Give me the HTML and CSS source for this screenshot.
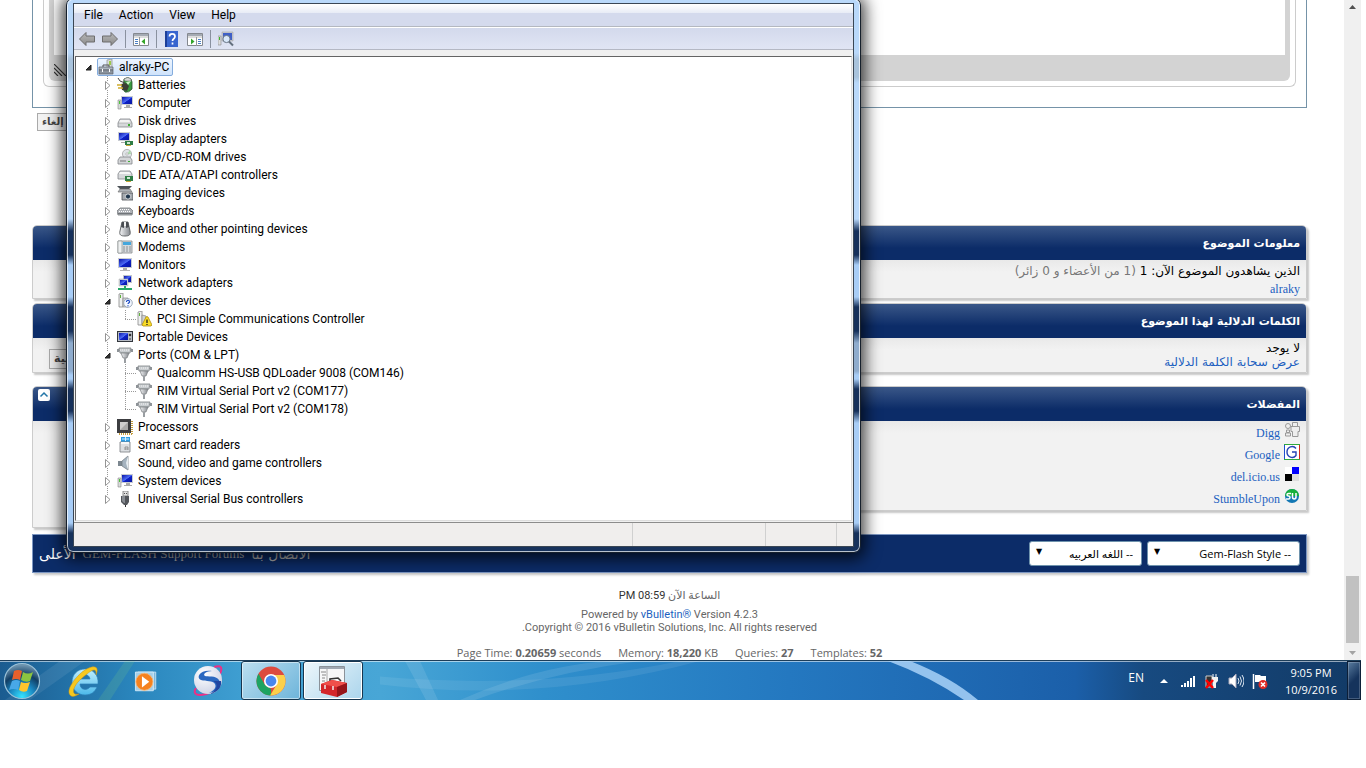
FILE: index.html
```html
<!DOCTYPE html>
<html lang="ar">
<head>
    <meta charset="UTF-8">
    <meta name="viewport" content="width=device-width, initial-scale=1.0">
    <title>GEM-FLASH Support Forums</title>
    <link rel="stylesheet" href="styles.css">
</head>
<body>
    <svg class="sprite" aria-hidden="true">
        <defs>
            <linearGradient id="g-metal" x1="0" y1="0" x2="1" y2="0"><stop offset="0" stop-color="#f4f5f6"/><stop offset="1" stop-color="#85898f"/></linearGradient>
            <linearGradient id="g-arrow" x1="0" y1="0" x2="0" y2="1"><stop offset="0" stop-color="#b9b9b9"/><stop offset="1" stop-color="#8a8a8a"/></linearGradient>
            <linearGradient id="g-screen" x1="0" y1="0" x2="1" y2="1"><stop offset="0" stop-color="#0a14a8"/><stop offset=".5" stop-color="#4d6cf5"/><stop offset=".55" stop-color="#0d20c8"/><stop offset="1" stop-color="#0818a0"/></linearGradient>
            <linearGradient id="g-e" x1="0" y1="0" x2="0" y2="1"><stop offset="0" stop-color="#c2f0ff"/><stop offset="1" stop-color="#4bb8ea"/></linearGradient>
            <radialGradient id="g-orb" cx=".5" cy=".95" r=".9"><stop offset="0" stop-color="#35e4ff"/><stop offset=".4" stop-color="#1a86c0"/><stop offset=".7" stop-color="#123e64"/><stop offset="1" stop-color="#6d93ae"/></radialGradient>
            <radialGradient id="g-ball" cx=".35" cy=".3" r=".8"><stop offset="0" stop-color="#ffffff"/><stop offset="1" stop-color="#c9cfe4"/></radialGradient>
        </defs>
        <symbol id="i-monitor" viewBox="0 0 16 16"><path d="M1 1h14v10H1z" fill="#c9ccd2"/><path d="M2 2h12v8H2z" fill="url(#g-screen)"/><path d="M6 11h4v2H6z" fill="#aaa"/><path d="M3 13h10v1H3z" fill="#b8b8b8"/></symbol>
        <symbol id="i-computer" viewBox="0 0 16 16"><path d="M4 1h12v9H4z" fill="#c9ccd2"/><path d="M5 2h10v7H5z" fill="url(#g-screen)"/><path d="M9 10h4v2H9zM7 12h8v1H7z" fill="#aaa"/><path d="M1 5h3v9H1z" fill="#d8dada" stroke="#888" stroke-width=".6"/><path d="M2 6h1v3H2z" fill="#4cc23a"/></symbol>
        <symbol id="i-root" viewBox="0 0 16 16"><path d="M9 1l5-1v9H9z" fill="#d9ddd9" stroke="#8b8f92" stroke-width=".7"/><path d="M11 2h2v4h-2z" fill="#9bc94b"/><path d="M5 8V6h6v2" fill="none" stroke="#555"/><path d="M1 8h14v3H1z" fill="#aeb6bf" stroke="#5a6068" stroke-width=".7"/><path d="M1 11h14v4H1z" fill="#8a939d" stroke="#5a6068" stroke-width=".7"/><path d="M4 10h1v3H4zM11 10h1v3h-1z" fill="#fff"/></symbol>
        <symbol id="i-battery" viewBox="0 0 16 16"><path d="M7 2q4-3 7 0l1 3v7q-3 4-7 3l-2-3z" fill="#3a9a3f" stroke="#2b4a2d" stroke-width=".8"/><path d="M7 2q4-3 7 0v2H8z" fill="#d8dad8" stroke="#777" stroke-width=".6"/><path d="M9 5l5-1-3 4z" fill="#c9f5c4"/><path d="M1 1l2 3 5 2" fill="none" stroke="#444"/><path d="M4 7l5-1 3 3-2 5-5-1z" fill="#3c3f36"/><path d="M0 8h5M1 11h5" stroke="#d0ac2c" stroke-width="1.500"/></symbol>
        <symbol id="i-disk" viewBox="0 0 16 16"><path d="M3 6h10l2 4v4H1v-4z" fill="#d6d8da" stroke="#83878a" stroke-width=".8"/><path d="M3 7h9l2 3H2z" fill="#f3f3f3"/><path d="M1 10h14" stroke="#9a9da0" stroke-width=".6"/><path d="M11 11h2v2h-2z" fill="#3fae35"/></symbol>
        <symbol id="i-display" viewBox="0 0 16 16"><path d="M1 1h12v9H1z" fill="#c9ccd2"/><path d="M2 2h10v7H2z" fill="url(#g-screen)"/><path d="M4 11h6v1H4z" fill="#aaa"/><path d="M8 10h8v4H8z" fill="#2f7d44"/><path d="M10 11h3v2h-3z" fill="#cfe9d3"/><path d="M9 14h5v1H9z" fill="#c9a93a"/></symbol>
        <symbol id="i-dvd" viewBox="0 0 16 16"><circle cx="10" cy="5" r="4.600" fill="#dfe3e6" stroke="#999" stroke-width=".7"/><path d="M10 5l3-4 1 4z" fill="#a9dba9"/><circle cx="10" cy="5" r="1.200" fill="#fff" stroke="#888" stroke-width=".5"/><path d="M3 8h10l2 3v4H1v-4z" fill="#d4d6d8" stroke="#83878a" stroke-width=".8"/><path d="M3 12h6" stroke="#777"/><path d="M11 12h2v1h-2z" fill="#3fae35"/></symbol>
        <symbol id="i-ide" viewBox="0 0 16 16"><path d="M3 4h10l2 3v5H1V7z" fill="#d6d8da" stroke="#83878a" stroke-width=".8"/><path d="M3 5h9l2 2H2z" fill="#f5f5f5"/><path d="M8 9h8v5H8z" fill="#2f7d44"/><path d="M10 10h3v2h-3z" fill="#cfe9d3"/><path d="M9 14h5v1H9z" fill="#c9a93a"/></symbol>
        <symbol id="i-imaging" viewBox="0 0 16 16"><path d="M0 1h15l-3 3H3z" fill="#4c5258"/><path d="M3 4h10l2 3H1z" fill="#aeb3b8" stroke="#666" stroke-width=".6"/><path d="M5 8h11v7H5z" fill="#a6abb0" stroke="#4b4f54" stroke-width=".8"/><circle cx="11" cy="11.500" r="2.600" fill="#22384e" stroke="#eee" stroke-width=".8"/></symbol>
        <symbol id="i-keyboard" viewBox="0 0 16 16"><path d="M3 5h10l3 3-1 4H1L0 8z" fill="#aeb1b6" stroke="#75787c" stroke-width=".8"/><path d="M3 6.500h10M2 8.500h12" stroke="#fff" stroke-dasharray="1 1"/><path d="M1 10.500h14" stroke="#707478"/></symbol>
        <symbol id="i-mouse" viewBox="0 0 16 16"><path d="M5 1h6l2 9c1 4-1 5-5 5s-6-1-5-5z" fill="url(#g-metal)" stroke="#56595c" stroke-width=".9"/><path d="M5 1h2v6l-3-1zM9 1h2l1 5-3 1z" fill="#494c51"/><path d="M7 1h2v4H7z" fill="#f2f2f2"/></symbol>
        <symbol id="i-modem" viewBox="0 0 16 16"><path d="M1 2h14v12H1z" fill="#d6dadd" stroke="#85898c" stroke-width=".8"/><path d="M1 2h4v12H1z" fill="#eef0f0" stroke="#85898c" stroke-width=".6"/><path d="M6 3h8v3H6z" fill="#45a7dd"/><path d="M6 8h8M6 10h8M6 12h8" stroke="#8d9296" stroke-dasharray="2 1"/></symbol>
        <symbol id="i-network" viewBox="0 0 16 16"><path d="M6 0h9v8H6z" fill="#c2c6cc"/><path d="M7 1h7v6H7z" fill="url(#g-screen)"/><path d="M2 4h9v7H2z" fill="#d2d6dc" stroke="#999" stroke-width=".4"/><path d="M3 5h7v5H3z" fill="url(#g-screen)"/><path d="M1 14h14M8 11v4" stroke="#27a768" stroke-width="2"/></symbol>
        <symbol id="i-other" viewBox="0 0 16 16"><path d="M2 1l4-1v14H2z" fill="#eef0f0" stroke="#888" stroke-width=".8"/><path d="M3 2h1v3H3z" fill="#62b33e"/><path d="M6 5h5v9H6z" fill="#cfd2d5" stroke="#888" stroke-width=".7"/><circle cx="11" cy="10" r="4.300" fill="#f4f8ff" stroke="#8c9aac" stroke-width=".8"/><path d="M9.500 9c0-2.500 3.500-2 3 0-.3 1-1.500 1-1.500 2M11 12.300v1" fill="none" stroke="#1c49c2" stroke-width="1.200"/></symbol>
        <symbol id="i-warn" viewBox="0 0 16 16"><path d="M2 1l4-1v14H2z" fill="#eef0f0" stroke="#888" stroke-width=".8"/><path d="M3 2h1v3H3z" fill="#62b33e"/><path d="M6 4l4 1v8H6z" fill="#cfd2d5" stroke="#888" stroke-width=".7"/><path d="M10 6q1-1 2 0l4 8-1 1H7l-1-1z" fill="#f9dc25" stroke="#ad8c13" stroke-width=".8"/><path d="M11 8.500v3.500M11 13v1" stroke="#222" stroke-width="1.300"/></symbol>
        <symbol id="i-portable" viewBox="0 0 16 16"><path d="M0 2h16v11H0z" fill="#33373d"/><path d="M1 3h14v9H1z" fill="#b7bcc4"/><path d="M2 4h9v7H2z" fill="url(#g-screen)"/><circle cx="13" cy="6" r="1.300" fill="#333"/><circle cx="13" cy="10" r=".8" fill="#333"/></symbol>
        <symbol id="i-port" viewBox="0 0 16 16"><path d="M0 2h2v3H0zM14 2h2v3h-2z" fill="#8e9398"/><path d="M2 1h12l-1 5H3z" fill="#c9cdd0" stroke="#7c8084" stroke-width=".8"/><path d="M3 3h10" stroke="#f5f5f5" stroke-dasharray="1 1"/><path d="M4 6h8l-2 5H6z" fill="url(#g-metal)" stroke="#787c80" stroke-width=".7"/><path d="M7 11h2v5H7z" fill="#9a9ea2"/></symbol>
        <symbol id="i-cpu" viewBox="0 0 16 16"><path d="M2 15h13M15 2v13" stroke="#c59d3e" stroke-width="2" stroke-dasharray="1 1"/><path d="M0 0h14v14H0z" fill="#3c3d40"/><path d="M3 3h8v8H3z" fill="#aaa"/><path d="M3 3h8l-8 8z" fill="#cfcfcf"/></symbol>
        <symbol id="i-card" viewBox="0 0 16 16"><path d="M4 0h9v6H4z" fill="#2f9ee4"/><path d="M5 2h7M8.500 0v4" stroke="#d5efff"/><path d="M3 5h10v10H3z" fill="#dcdfe2" stroke="#787c80" stroke-width=".8"/><path d="M4 5h8v2H4z" fill="#f7f7f7"/><path d="M8 13v-3h3v3M8 12h3" fill="none" stroke="#777" stroke-width=".7"/></symbol>
        <symbol id="i-sound" viewBox="0 0 16 16"><path d="M1 6h4v5H1z" fill="#7c8790"/><path d="M5 6l6-5v14l-6-4z" fill="#a5b3bf" stroke="#707880" stroke-width=".7"/><path d="M11 1v14l-2-7z" fill="#e7edf1"/></symbol>
        <symbol id="i-usb" viewBox="0 0 16 16"><path d="M6 0h5v5H6z" fill="#e3e3e3" stroke="#777" stroke-width=".8"/><path d="M7 2h1v1H7zM9 2h1v1H9z" fill="#555"/><path d="M4 5h8v6l-2 3H7l-3-3z" fill="#53565b"/><path d="M5 5h3v7H7l-2-2z" fill="#888c92"/><path d="M8 14h1v2H8z" fill="#333"/></symbol>
        <symbol id="i-closed" viewBox="0 0 9 9"><path d="M2.500.5v8L7 4.500z" fill="#fff" stroke="#949494"/></symbol>
        <symbol id="i-open" viewBox="0 0 9 9"><path d="M7 2v5H2z" fill="#333" stroke="#222"/></symbol>
        <symbol id="i-arrow" viewBox="0 0 16 16"><path d="M.5 8L7 1.500V5h8.500v6H7v3.500z" fill="url(#g-arrow)" stroke="#6d6d6d"/></symbol>
        <symbol id="i-pane" viewBox="0 0 16 16"><path d="M.5 2.500h15v12H.5z" fill="#fff" stroke="#84888f"/><path d="M1 3h14v2H1z" fill="#a5abb4"/><path d="M1 6h14" stroke="#bbb"/><path d="M2 8.500h3M2 10.500h3M2 12.500h3" stroke="#4a7fc4"/><path d="M6.500 6v9" stroke="#999"/><path d="M12 7.500v6L8.500 10.500z" fill="#35a52b"/></symbol>
        <symbol id="i-help" viewBox="0 0 16 16"><path d="M1 0h13v16H1z" fill="#3865cf"/><path d="M1 0h2v16H1z" fill="#1d3f98"/><path d="M5.500 5.500c0-3.500 5.500-3.500 5.500 0C11 8 8.500 7.500 8.500 10M8.500 11.500v2" fill="none" stroke="#fff" stroke-width="1.700"/></symbol>
        <symbol id="i-scan" viewBox="0 0 16 16"><path d="M4 1h11v9H4z" fill="#c9ccd2" stroke="#999" stroke-width=".5"/><path d="M5 2h9v7H5z" fill="#3f5fc8"/><path d="M0 5h3v9H0z" fill="#ddd" stroke="#888" stroke-width=".6"/><path d="M1 6h1v3H1z" fill="#3cb52d"/><circle cx="8.500" cy="8" r="3.600" fill="#d9e8fa" stroke="#6a7786"/><path d="M11 10.500l4 4" stroke="#64707e" stroke-width="2"/></symbol>
    </svg>

    <div class="desktop">
        <div class="browser">
            <main class="page" dir="rtl">
                <div class="editor">
                    <div class="editor-frame">
                        <div class="editor-body">
                            <div class="editor-text"></div>
                            <svg class="resize" viewBox="0 0 12 12"><path d="M0 0l12 12M0 4l8 8M0 8l4 4" stroke="#333" stroke-width="1.200"/></svg>
                        </div>
                    </div>
                </div>
                <div class="editor-actions"><button class="small-button">إلغاء</button></div>

                <section class="block">
                    <h2>معلومات الموضوع</h2>
                    <div class="block-body viewers">
                        <div>الذين يشاهدون الموضوع الآن: 1 <span class="muted">(1 من الأعضاء و 0 زائر)</span></div>
                        <a class="latin" href="#">alraky</a>
                    </div>
                </section>

                <section class="block tags">
                    <h2>الكلمات الدلالية لهذا الموضوع</h2>
                    <div class="block-body tag-body">
                        <div>
                            <div>لا يوجد</div>
                            <a href="#">عرض سحابة الكلمة الدلالية</a>
                        </div>
                        <button class="small-button tag-button">تعديل الدلالية</button>
                    </div>
                </section>

                <div class="block-row">
                    <section class="block">
                        <h2>المفضلات</h2>
                        <ul class="block-body bookmarks">
                            <li><svg viewBox="0 0 16 16"><g fill="#eee" stroke="#999"><circle cx="4" cy="4" r="2.500"/><path d="M8.500.5h5v4h-5z"/><path d="M2.500 8h3v2.500h-3zM1.500 11h5v3h-5z"/><path d="M7 4.500h8.500v5H14v5H8.500v-5H7z"/></g></svg><a class="latin" href="#">Digg</a></li>
                            <li><svg viewBox="0 0 16 16"><path d="M0 0h16v16H0z" fill="#fff"/><path d="M.5 0v16" stroke="#1d4fd0"/><path d="M0 .5h16M0 15.500h16" stroke="#2fa83c"/><path d="M15.500 1v14" stroke="#d2291c"/><path d="M12 4.500C9 .5 3 3 3 8s6 7.500 9 3.500V8H8" fill="none" stroke="#2543b4" stroke-width="1.400"/></svg><a class="latin" href="#">Google</a></li>
                            <li><svg viewBox="0 0 16 16"><path d="M1 1h7v7H1z" fill="#fff"/><path d="M8 1h7v7H8z" fill="#00f"/><path d="M1 8h7v7H1z"/><path d="M8 8h7v7H8z" fill="#ddd"/></svg><a class="latin" href="#">del.icio.us</a></li>
                            <li><svg viewBox="0 0 16 16"><circle cx="8" cy="8" r="7" fill="#1478b4"/><path d="M1 8a7 7 0 0 1 14 0z" fill="#17b03c"/><path d="M7 5.500H4.500c-2 0-2 2.500 0 2.500s2 3 0 3H2M8.500 5v4c0 2.500 3.500 2.500 3.500 0V5" fill="none" stroke="#fff" stroke-width="1.500"/></svg><a class="latin" href="#">StumbleUpon</a></li>
                        </ul>
                    </section>
                    <section class="block rules">
                        <h2><button class="collapse" aria-label="طي"><svg viewBox="0 0 12 12"><path d="M2.500 7.500L6 4l3.500 3.500" fill="none" stroke="#2176a8" stroke-width="1.500"/></svg></button></h2>
                        <div class="block-body"></div>
                    </section>
                </div>

                <div class="footer-bar">
                    <span class="picker wide"><select aria-label="Style"><option>-- Gem-Flash Style</option></select></span>
                    <span class="picker"><select aria-label="اللغة"><option>-- اللغه العربيه</option></select></span>
                    <nav class="footer-links">
                        <a href="#">الاتصال بنا</a>
                        <a class="latin" href="#">GEM-FLASH Support Forums</a>
                        <a class="top-link" href="#">الأعلى</a>
                    </nav>
                </div>

                <footer class="copyright">
                    <p class="clock-line">الساعة الآن <span class="time">08:59 PM</span></p>
                    <p dir="ltr">Powered by <a href="#">vBulletin®</a> Version 4.2.3</p>
                    <p>Copyright © 2016 vBulletin Solutions, Inc. All rights reserved.</p>
                    <div class="stats" dir="ltr">
                        <span>Page Time: <b>0.20659</b> seconds</span>
                        <span>Memory: <b>18,220</b> KB</span>
                        <span>Queries: <b>27</b></span>
                        <span>Templates: <b>52</b></span>
                    </div>
                </footer>
            </main>
            <div class="scrollbar" aria-hidden="true">
                <svg viewBox="0 0 17 14"><path d="M5 9h7L8.500 5z" fill="#505050"/></svg>
                <div class="thumb"></div>
                <svg viewBox="0 0 17 14"><path d="M5 5h7L8.500 9z" fill="#a3a3a3"/></svg>
            </div>
        </div>

        <div class="window" lang="en">
            <div class="window-inner">
                <div class="menubar"><button>File</button><button>Action</button><button>View</button><button>Help</button></div>
                <div class="toolbar">
                    <button aria-label="Back"><svg><use href="#i-arrow"/></svg></button>
                    <button aria-label="Forward"><svg class="flip"><use href="#i-arrow"/></svg></button>
                    <span class="separator"></span>
                    <button aria-label="Show console tree"><svg><use href="#i-pane"/></svg></button>
                    <span class="separator"></span>
                    <button aria-label="Help"><svg><use href="#i-help"/></svg></button>
                    <button aria-label="Show action pane"><svg class="flip"><use href="#i-pane"/></svg></button>
                    <span class="separator"></span>
                    <button aria-label="Scan for hardware changes"><svg><use href="#i-scan"/></svg></button>
                </div>
                <div class="tree-pane">
                    <div class="row root"><svg class="toggle"><use href="#i-open"/></svg><span class="selected"><svg class="icon"><use href="#i-root"/></svg>alraky-PC</span></div>
                    <ul class="tree">
                        <li><div class="row"><svg class="toggle"><use href="#i-closed"/></svg><svg class="icon"><use href="#i-battery"/></svg>Batteries</div></li>
                        <li><div class="row"><svg class="toggle"><use href="#i-closed"/></svg><svg class="icon"><use href="#i-computer"/></svg>Computer</div></li>
                        <li><div class="row"><svg class="toggle"><use href="#i-closed"/></svg><svg class="icon"><use href="#i-disk"/></svg>Disk drives</div></li>
                        <li><div class="row"><svg class="toggle"><use href="#i-closed"/></svg><svg class="icon"><use href="#i-display"/></svg>Display adapters</div></li>
                        <li><div class="row"><svg class="toggle"><use href="#i-closed"/></svg><svg class="icon"><use href="#i-dvd"/></svg>DVD/CD-ROM drives</div></li>
                        <li><div class="row"><svg class="toggle"><use href="#i-closed"/></svg><svg class="icon"><use href="#i-ide"/></svg>IDE ATA/ATAPI controllers</div></li>
                        <li><div class="row"><svg class="toggle"><use href="#i-closed"/></svg><svg class="icon"><use href="#i-imaging"/></svg>Imaging devices</div></li>
                        <li><div class="row"><svg class="toggle"><use href="#i-closed"/></svg><svg class="icon"><use href="#i-keyboard"/></svg>Keyboards</div></li>
                        <li><div class="row"><svg class="toggle"><use href="#i-closed"/></svg><svg class="icon"><use href="#i-mouse"/></svg>Mice and other pointing devices</div></li>
                        <li><div class="row"><svg class="toggle"><use href="#i-closed"/></svg><svg class="icon"><use href="#i-modem"/></svg>Modems</div></li>
                        <li><div class="row"><svg class="toggle"><use href="#i-closed"/></svg><svg class="icon"><use href="#i-monitor"/></svg>Monitors</div></li>
                        <li><div class="row"><svg class="toggle"><use href="#i-closed"/></svg><svg class="icon"><use href="#i-network"/></svg>Network adapters</div></li>
                        <li>
                            <div class="row"><svg class="toggle"><use href="#i-open"/></svg><svg class="icon"><use href="#i-other"/></svg>Other devices</div>
                            <ul class="children">
                                <li class="row"><svg class="icon"><use href="#i-warn"/></svg>PCI Simple Communications Controller</li>
                            </ul>
                        </li>
                        <li><div class="row"><svg class="toggle"><use href="#i-closed"/></svg><svg class="icon"><use href="#i-portable"/></svg>Portable Devices</div></li>
                        <li>
                            <div class="row"><svg class="toggle"><use href="#i-open"/></svg><svg class="icon"><use href="#i-port"/></svg>Ports (COM &amp; LPT)</div>
                            <ul class="children">
                                <li class="row"><svg class="icon"><use href="#i-port"/></svg>Qualcomm HS-USB QDLoader 9008 (COM146)</li>
                                <li class="row"><svg class="icon"><use href="#i-port"/></svg>RIM Virtual Serial Port v2 (COM177)</li>
                                <li class="row"><svg class="icon"><use href="#i-port"/></svg>RIM Virtual Serial Port v2 (COM178)</li>
                            </ul>
                        </li>
                        <li><div class="row"><svg class="toggle"><use href="#i-closed"/></svg><svg class="icon"><use href="#i-cpu"/></svg>Processors</div></li>
                        <li><div class="row"><svg class="toggle"><use href="#i-closed"/></svg><svg class="icon"><use href="#i-card"/></svg>Smart card readers</div></li>
                        <li><div class="row"><svg class="toggle"><use href="#i-closed"/></svg><svg class="icon"><use href="#i-sound"/></svg>Sound, video and game controllers</div></li>
                        <li><div class="row"><svg class="toggle"><use href="#i-closed"/></svg><svg class="icon"><use href="#i-computer"/></svg>System devices</div></li>
                        <li><div class="row"><svg class="toggle"><use href="#i-closed"/></svg><svg class="icon"><use href="#i-usb"/></svg>Universal Serial Bus controllers</div></li>
                    </ul>
                </div>
                <div class="statusbar"><span></span><span></span><span></span></div>
            </div>
        </div>

        <div class="taskbar" lang="en">
            <svg class="taskbar-glass" viewBox="0 0 1361 40" preserveAspectRatio="none" aria-hidden="true">
                <path d="M5 40L60 0h25L30 40z" fill="#fff" opacity=".08"/>
                <path d="M98 40L125 0h10l-25 40z" fill="#8fe07a" opacity=".15"/>
                <path d="M405 0h15l18 40h-12z" fill="#fff" opacity=".1"/>
                <path d="M380 24q160 20 320-24h-20q-140 30-300 16z" fill="#fff" opacity=".08"/>
                <path d="M460 40q80-36 150-40h30q-90 12-165 40z" fill="#fff" opacity=".1"/>
                <path d="M888 0h22q40 16 68 40h-14Q930 16 888 0z" fill="#a9d2f8" opacity=".85"/>
            </svg>
            <button class="start" aria-label="Start"><svg viewBox="0 0 38 38"><circle cx="19" cy="19" r="17.500" fill="url(#g-orb)" stroke="#9bc2d8" stroke-width="1.200"/><path d="M11 9q4-2 8 0l-2 9q-4-2-8 0z" fill="#e8602c"/><path d="M20 10q5 3 10 0l-3 9q-4 2-9-1z" fill="#8cc540"/><path d="M9 19q4-2 8 0l-2 9q-4-2-9 0z" fill="#48a8e8"/><path d="M18 20q4 2 9 0l-3 9q-4 2-8-1z" fill="#fdc52d"/></svg></button>
            <button class="pinned" aria-label="Internet Explorer"><svg viewBox="0 0 32 32"><path d="M17 4C9 4 4 10 4 17c0 8 6 13 13 13 6 0 10-3 12-8h-7c-3 4-10 3-10-3h18C31 10 25 4 17 4zM12 14c1-6 9-6 10 0z" fill="url(#g-e)" stroke="#2b7fb8" stroke-width=".7"/><path d="M28 10c5-12-7-9-15-2S-3 27 3 31c2 1 5 0 8-2-9 2-6-8 2-15S29 0 28 10z" fill="#f6c81f" stroke="#c8931a" stroke-width=".5"/></svg></button>
            <button class="pinned" aria-label="Windows Media Player"><svg viewBox="0 0 32 32"><path d="M6 5h22v21H6z" fill="#7fb8dc" stroke="#cfe6f5"/><path d="M3 5h22v23H3z" fill="#a4cfe9" stroke="#dcf0fb"/><circle cx="14" cy="17" r="10.500" fill="#f5821f" stroke="#fbb673"/><path d="M11 10l9 7-9 7z" fill="#fff"/></svg></button>
            <button class="pinned" aria-label="Spark"><svg viewBox="0 0 32 32"><path d="M22 2c7-2 9 0 6 7M4 23c-4 7 2 8 10 6s14-9 15-15" fill="none" stroke="#ec2f86" stroke-width="2"/><circle cx="16" cy="15" r="14" fill="url(#g-ball)"/><path d="M20 6C9 4 3 12 9 15c5 2 12 0 14 4s-2 7-6 9c9-1 13-8 10-13S15 12 13 11c-3-2 2-5 7-5z" fill="#2b68c0"/><path d="M21 16c7 3 3 10-3 13 9-2 12-8 11-13z" fill="#2246a0"/></svg></button>
            <button class="task" aria-label="Google Chrome"><svg viewBox="0 0 32 32"><circle cx="16" cy="16" r="14.500" fill="#dd4b3e"/><path d="M3.500 8.700L10 20l6 4 0 6.500A14.500 14.500 0 0 1 3.500 8.700z" fill="#1da362"/><path d="M16 10h13.200A14.500 14.500 0 0 1 15 30.500L22 19z" fill="#fcd04b"/><circle cx="16" cy="16" r="7" fill="#fff"/><circle cx="16" cy="16" r="5.400" fill="#4a87ee"/></svg></button>
            <button class="task active" aria-label="Device Manager"><svg viewBox="0 0 32 32"><path d="M2.500 1.500h25v24h-25z" fill="#f6f7f8" stroke="#8b9299"/><path d="M3 2h24v2H3z" fill="#9fa8b2"/><path d="M4 7h5M5 10h4M5 13h3M5 16h3" stroke="#888"/><path d="M10 4v16" stroke="#aaa"/><path d="M13 16v-2l8-1 3 3" fill="none" stroke="#333" stroke-width="1.600"/><path d="M4 19l11-4 15 3v9l-10 5-16-4z" fill="#d3262a"/><path d="M4 19l11-4 15 3-10 4z" fill="#f0504b"/><path d="M20 22v10l10-5v-9z" fill="#96151a"/><path d="M8 20v4M16 21v4" stroke="#eee" stroke-width="1.500"/></svg></button>
            <div class="tray">
                <span class="lang">EN</span>
                <svg viewBox="0 0 16 16"><path d="M4 10h8L8 6z" fill="#fff"/></svg>
                <svg viewBox="0 0 16 16"><path d="M1 12h2v2H1zM4 10h2v4H4zM7 8h2v6H7zM10 5h2v9h-2zM13 3h2v11h-2z" fill="#fff"/></svg>
                <svg viewBox="0 0 16 16"><path d="M2 3h6v11H2z" fill="#333" stroke="#ccc"/><path d="M8 4h6v4l-2 2v5H9v-5L8 8z" fill="#f2f2f2"/><path d="M9 1v3M12 1v3" stroke="#fff"/><path d="M2 7l7 8M9 7l-7 8" stroke="#f00" stroke-width="2.500"/></svg>
                <svg viewBox="0 0 16 16"><path d="M1 5h3l4-4v14l-4-4H1z" fill="#fff" stroke="#aab"/><path d="M10 5q2 3 0 6M12 3.500q3 4.500 0 9M14 2q4 6 0 12" fill="none" stroke="#dfe8f2"/></svg>
                <svg viewBox="0 0 16 16"><path d="M1.500 1v15" stroke="#fff" stroke-width="1.500"/><path d="M3 2h5l1 1h5v7H9L8 9H3z" fill="#fff"/><circle cx="11" cy="11.500" r="4.500" fill="#e02b26"/><path d="M9 9.500l4 4M13 9.500l-4 4" stroke="#fff" stroke-width="1.600"/></svg>
                <div class="clock"><div>9:05 PM</div><div>10/9/2016</div></div>
            </div>
            <button class="show-desktop" aria-label="Show desktop"></button>
        </div>
    </div>
</body>
</html>
```
FILE: styles.css
```css
* {
    box-sizing: border-box;
}
body {
    margin: 0;
    background: #fff;
    font-family: "Open Sans", "DejaVu Sans", sans-serif;
    font-size: 12px;
}
ul, p, h2 {
    margin: 0;
    padding: 0;
}
ul {
    list-style: none;
}
a {
    color: #1c5fc0;
    text-decoration: none;
}
button {
    border: none;
    background: none;
    padding: 0;
    font: inherit;
    color: inherit;
}
svg {
    display: block;
    flex: none;
}
.sprite {
    position: absolute;
    width: 0;
    height: 0;
}
.desktop {
    position: relative;
    margin-right: 5px;
    overflow: hidden;
}
.browser {
    display: flex;
}

/* forum page */
.page {
    flex: 1;
    padding: 0 37px 0 32px;
    font-family: "DejaVu Sans", sans-serif;
    line-height: 14px;
}
.latin {
    font-family: "Liberation Serif", serif;
    font-size: 12px;
}
.editor {
    border: 1px solid #7593a8;
    border-top: none;
    padding: 0 10px 20px;
}
.editor-frame {
    border: 1px solid #ccc;
    border-top: none;
    border-radius: 0 0 6px 6px;
    padding: 0 5px 5px;
}
.editor-body {
    background: #d3d3d3;
    border-radius: 0 0 6px 6px;
    padding: 0 5px 5px;
    display: flex;
    flex-direction: column;
    align-items: flex-end;
}
.editor-text {
    width: 100%;
    height: 55px;
    background: #fff;
    margin-bottom: 9px;
}
.resize {
    width: 12px;
    height: 12px;
}
.editor-actions {
    display: flex;
    justify-content: flex-end;
    padding: 5px 5px 0;
    margin-bottom: 94px;
}
.small-button {
    height: 18px;
    padding: 0 4px;
    border: 1px solid #aaa;
    background: #f2f2f2;
    color: #444;
    font-size: 10px;
    font-weight: bold;
}
.block {
    border: 1px solid #ccc;
    border-radius: 5px 5px 0 0;
    box-shadow: 2px 2px 2px #c8c8c8;
    margin-bottom: 4px;
}
.block h2 {
    height: 34px;
    padding: 2px 6px 0;
    border-radius: 4px 4px 0 0;
    background: linear-gradient(#3a5788, #0c2c68 65%);
    color: #fff;
    font-size: 11px;
    line-height: 31px;
}
.block-body {
    background: linear-gradient(#e9e9e9, #f2f2f2 12px);
    padding: 3px 6px 2px;
}
.viewers {
    padding-top: 2px;
    padding-bottom: 0;
    line-height: 18px;
}
.viewers a {
    display: block;
}
.muted {
    color: #777;
}
.block.tags {
    margin-bottom: 13px;
}
.tag-body {
    display: flex;
    justify-content: space-between;
    align-items: flex-end;
    padding-bottom: 3px;
    padding-left: 16px;
}
.tag-button {
    height: 20px;
    font-size: 11px;
}
.block-row {
    display: flex;
    align-items: flex-start;
    margin-bottom: 6px;
}
.block-row .block {
    flex: 1;
    margin-bottom: 0;
}
.block-row .rules {
    flex: none;
    width: 50%;
}
.rules .block-body {
    height: 106px;
}
.rules h2 {
    display: flex;
    justify-content: flex-end;
    align-items: flex-start;
    padding-left: 5px;
}
.collapse {
    width: 12px;
    height: 12px;
    border-radius: 2px;
    background: #fff;
}
.bookmarks {
    padding: 1px 6px 0;
}
.bookmarks li {
    display: flex;
    height: 22px;
    gap: 4px;
}
.bookmarks svg {
    width: 16px;
    height: 16px;
}
.bookmarks a {
    line-height: 22px;
}
.footer-bar {
    display: flex;
    align-items: center;
    gap: 5px;
    height: 39px;
    padding: 0 6px;
    border: 1px solid #7d97c2;
    background: #0c2c68;
    box-shadow: 2px 2px 2px #c8c8c8;
}
.picker {
    position: relative;
    width: 113px;
}
.picker.wide {
    width: 153px;
}
.picker select {
    appearance: none;
    display: block;
    width: 100%;
    height: 25px;
    padding: 0 8px;
    border: 1px solid #6f93ad;
    border-radius: 3px;
    background: #fff;
    color: #000;
    font: 11px "Open Sans", "DejaVu Sans", sans-serif;
}
.picker::after {
    content: "▼";
    position: absolute;
    left: 7px;
    top: 4px;
    font-size: 8px;
    color: #000;
    pointer-events: none;
}
.footer-links {
    display: flex;
    align-items: center;
    gap: 7px;
    margin-right: auto;
}
.footer-links a {
    color: #b5b5b5;
    font-size: 14px;
}
.footer-links .latin {
    font-size: 13px;
}
.footer-links .top-link {
    color: #fff;
}
.copyright {
    padding-top: 16px;
    color: #666;
    font-size: 11px;
    font-family: Roboto, "DejaVu Sans", sans-serif;
    line-height: 13px;
    text-align: center;
}
.clock-line {
    margin-bottom: 6px;
}
.time {
    color: #333;
}
.stats {
    display: flex;
    justify-content: center;
    gap: 17px;
    margin-top: 12px;
    font-family: "Open Sans", sans-serif;
}
.scrollbar {
    width: 17px;
    height: 660px;
    background: #f0f0f0;
    display: flex;
    flex-direction: column;
}
.scrollbar svg {
    width: 17px;
    height: 14px;
}
.thumb {
    width: 13px;
    height: 67px;
    margin: auto 2px 3px;
    background: #c1c1c1;
}

/* device manager window */
.window {
    position: absolute;
    left: 66px;
    top: -2px;
    width: 795px;
    padding: 4px 6px 5px;
    border: 1px solid #16202c;
    border-radius: 7px;
    background: linear-gradient(#b9d8fa 0 54px, #a9c3dc 60px 78px, #b9d8fa 84px 220px, #16305a 232px 256px, #a8cdf6 266px 298px, #16305a 308px 332px, #8faccd 344px 372px, #a8cdf6 376px 380px, #16305a 390px 412px, #a8cdf6 424px 524px, #17325c 534px);
    box-shadow: inset 0 0 0 1px rgba(255, 255, 255, .7), 0 2px 16px 4px rgba(0, 0, 0, .75);
    color: #000;
    font-family: Roboto, sans-serif;
}
.window-inner {
    border: 1px solid #3a4654;
    background: #f0f0f0;
}
.menubar {
    display: flex;
    height: 23px;
    padding-left: 2px;
    background: linear-gradient(#fff, #e8ecf6 40%, #d4daed 42%);
    border-bottom: 1px solid #b4b8c0;
}
.menubar button {
    padding: 0 8px;
    line-height: 22px;
}
.toolbar {
    display: flex;
    align-items: center;
    height: 23px;
    padding-left: 5px;
    gap: 7px;
    background: linear-gradient(#d3d9ec, #e0e5f4);
    border-top: 1px solid #fff;
    border-bottom: 1px solid #b4b8c4;
}
.toolbar svg {
    width: 16px;
    height: 16px;
}
.flip {
    transform: scaleX(-1);
}
.separator {
    width: 1px;
    height: 18px;
    background: #8a919f;
}
.tree-pane {
    margin: 6px 1px 0;
    min-height: 465px;
    padding: 1px 0 0 8px;
    border: 1px solid #646464;
    border-right-color: #ddd;
    border-bottom-color: #ddd;
    background: #fff;
}
.row {
    display: flex;
    align-items: center;
    height: 18px;
    line-height: 18px;
}
.toggle {
    width: 9px;
    height: 9px;
    background: #fff;
}
.icon {
    width: 16px;
    height: 16px;
    margin-right: 5px;
}
.selected {
    display: flex;
    align-items: center;
    height: 18px;
    margin-left: 4px;
    padding-right: 3px;
    border: 1px solid #84acdd;
    border-radius: 2px;
    background: linear-gradient(#eef5fe, #cfe3fb);
}
.tree {
    padding-left: 19px;
    background: repeating-linear-gradient(#999 0 1px, transparent 1px 2px) 23px 0 / 1px calc(100% - 9px) no-repeat;
}
.tree .row .toggle + .icon {
    margin-left: 5px;
}
.children {
    padding-left: 22px;
    background: repeating-linear-gradient(#999 0 1px, transparent 1px 2px) 22px 0 / 1px calc(100% - 8px) no-repeat;
}
.children .row::before {
    content: "";
    width: 11px;
    border-top: 1px dotted #999;
}
.statusbar {
    display: flex;
    justify-content: flex-end;
    height: 24px;
    margin-top: 1px;
    border-top: 1px solid #8c8c8c;
    background: #f0eeed;
}
.statusbar span {
    width: 133px;
    border-left: 1px solid #d0d0d0;
}
.statusbar span:nth-child(2) {
    width: 71px;
}
.statusbar span:nth-child(3) {
    width: 17px;
}

/* taskbar */
.taskbar {
    position: relative;
    display: flex;
    height: 40px;
    border-top: 1px solid #1d3e5a;
    background: linear-gradient(90deg, #1b5c90, #2a86bd 10%, #3f9fd2 18%, #48a6d6 28%, #2f8fcc 40%, #2478c0 58%, #1d64ae 75%, #1b5fa9 79%, #174a80 84%, #123a66);
    box-shadow: inset 0 1px 0 rgba(255, 255, 255, .55);
    color: #fff;
}
.taskbar-glass {
    position: absolute;
    inset: 0;
    width: 100%;
    height: 100%;
}
.taskbar button, .tray {
    position: relative;
}
.start {
    width: 43px;
    padding-left: 3px;
    margin-right: 10px;
}
.start svg {
    width: 38px;
    height: 38px;
}
.pinned {
    display: flex;
    justify-content: center;
    align-items: center;
    width: 62px;
}
.pinned svg, .task svg {
    width: 32px;
    height: 32px;
}
.pinned:nth-of-type(3) svg {
    width: 26px;
    height: 26px;
}
.task {
    display: flex;
    justify-content: center;
    align-items: center;
    width: 60px;
    margin-left: 2px;
    border: 1px solid #17364f;
    border-radius: 3px;
    background: linear-gradient(135deg, #bcdff0, #6db4da);
    box-shadow: inset 0 0 0 1px rgba(255, 255, 255, .5);
}
.task.active {
    background: linear-gradient(135deg, #eef7fb, #abd5ec);
    box-shadow: inset 0 0 0 1px #fff;
}
.tray {
    display: flex;
    align-items: center;
    margin-left: auto;
    gap: 8px;
}
.tray svg {
    width: 16px;
    height: 16px;
}
.lang {
    margin-right: 4px;
    padding-bottom: 6px;
}
.clock {
    width: 54px;
    margin: 0 9px 0 8px;
    font-size: 11px;
    line-height: 17px;
    text-align: center;
    white-space: nowrap;
}
.show-desktop {
    width: 14px;
    border: 1px solid #0c1f38;
    background: linear-gradient(135deg, #5b7d9f, #15335c 50%);
    box-shadow: inset 0 0 0 1px rgba(255, 255, 255, .2);
}
```
